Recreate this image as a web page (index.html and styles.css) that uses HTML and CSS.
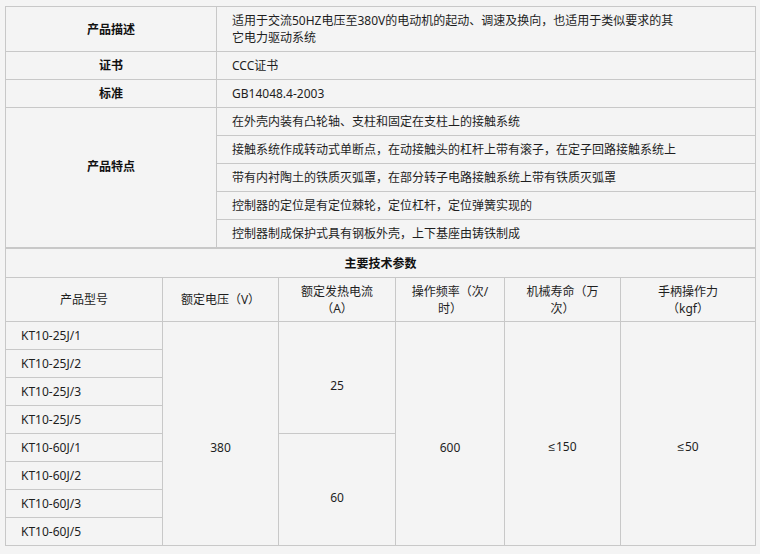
FILE: index.html
```html
<!DOCTYPE html>
<html lang="zh-CN">
<head>
<meta charset="utf-8">
<title>产品参数</title>
<link rel="stylesheet" href="styles.css">
</head>
<body>
<div class="wrap">
  <table class="info">
    <colgroup><col class="c-label"><col class="c-val"></colgroup>
    <tr class="r-desc"><th>产品描述</th><td>适用于交流50HZ电压至380V的电动机的起动、调速及换向，也适用于类似要求的其<br>它电力驱动系统</td></tr>
    <tr><th>证书</th><td>CCC证书</td></tr>
    <tr><th>标准</th><td>GB14048.4-2003</td></tr>
    <tr><th rowspan="5" class="feat">产品特点</th><td>在外壳内装有凸轮轴、支柱和固定在支柱上的接触系统</td></tr>
    <tr><td>接触系统作成转动式单断点，在动接触头的杠杆上带有滚子，在定子回路接触系统上</td></tr>
    <tr><td>带有内衬陶土的铁质灭弧罩，在部分转子电路接触系统上带有铁质灭弧罩</td></tr>
    <tr><td>控制器的定位是有定位棘轮，定位杠杆，定位弹簧实现的</td></tr>
    <tr><td>控制器制成保护式具有钢板外壳，上下基座由铸铁制成</td></tr>
  </table>
  <table class="spec">
    <colgroup>
      <col class="s1"><col class="s2"><col class="s3"><col class="s4"><col class="s5"><col class="s6">
    </colgroup>
    <tr class="r-title"><th colspan="6">主要技术参数</th></tr>
    <tr class="r-head"><td>产品型号</td><td>额定电压（V）</td><td>额定发热电流<br>（A）</td><td>操作频率（次/<br>时）</td><td>机械寿命（万<br>次）</td><td>手柄操作力<br>（kgf）</td></tr>
    <tr><td class="model">KT10-25J/1</td><td rowspan="8" class="big">380</td><td rowspan="4" class="half">25</td><td rowspan="8" class="big">600</td><td rowspan="8" class="big"><span class="le">≤</span>150</td><td rowspan="8" class="big"><span class="le">≤</span>50</td></tr>
    <tr><td class="model">KT10-25J/2</td></tr>
    <tr><td class="model">KT10-25J/3</td></tr>
    <tr><td class="model">KT10-25J/5</td></tr>
    <tr><td class="model">KT10-60J/1</td><td rowspan="4" class="half">60</td></tr>
    <tr><td class="model">KT10-60J/2</td></tr>
    <tr><td class="model">KT10-60J/3</td></tr>
    <tr><td class="model">KT10-60J/5</td></tr>
  </table>
</div>
</body>
</html>
```
FILE: styles.css
```css
html, body {
  margin: 0;
  background: #f4f4f4;
}
body {
  padding: 6px 0 0 5px;
  font-family: "Noto Sans", "Noto Sans CJK SC", sans-serif;
  font-size: 12px;
  line-height: 17px;
  color: #1e1e1e;
}
.wrap {
  width: 750px;
}
table {
  width: 750px;
  border-collapse: collapse;
  table-layout: fixed;
}
th, td {
  border: 1px solid #c8c8c8;
  padding: 0 15px;
  vertical-align: middle;
}
th {
  font-weight: bold;
  color: #111;
  text-align: center;
}
.info td {
  text-align: left;
}
.info tr {
  height: 28px;
}
.info tr.r-desc {
  height: 45px;
}
.info th.feat {
  padding-bottom: 23px;
}
.c-label { width: 211px; }
.c-val { width: 539px; }

.spec td {
  text-align: center;
}
.spec tr {
  height: 28px;
}
.spec tr.r-title {
  height: 29px;
}
.spec tr.r-head {
  height: 44px;
}
.spec td.model {
  text-align: left;
}
.spec td.big {
  padding-top: 27px;
}
.spec td.half {
  padding-top: 16px;
}
.le {
  font-family: "Liberation Sans", sans-serif;
  margin-right: 1px;
}
.s1 { width: 157px; }
.s2 { width: 116px; }
.s3 { width: 117px; }
.s4 { width: 109px; }
.s5 { width: 116px; }
.s6 { width: 135px; }
```
